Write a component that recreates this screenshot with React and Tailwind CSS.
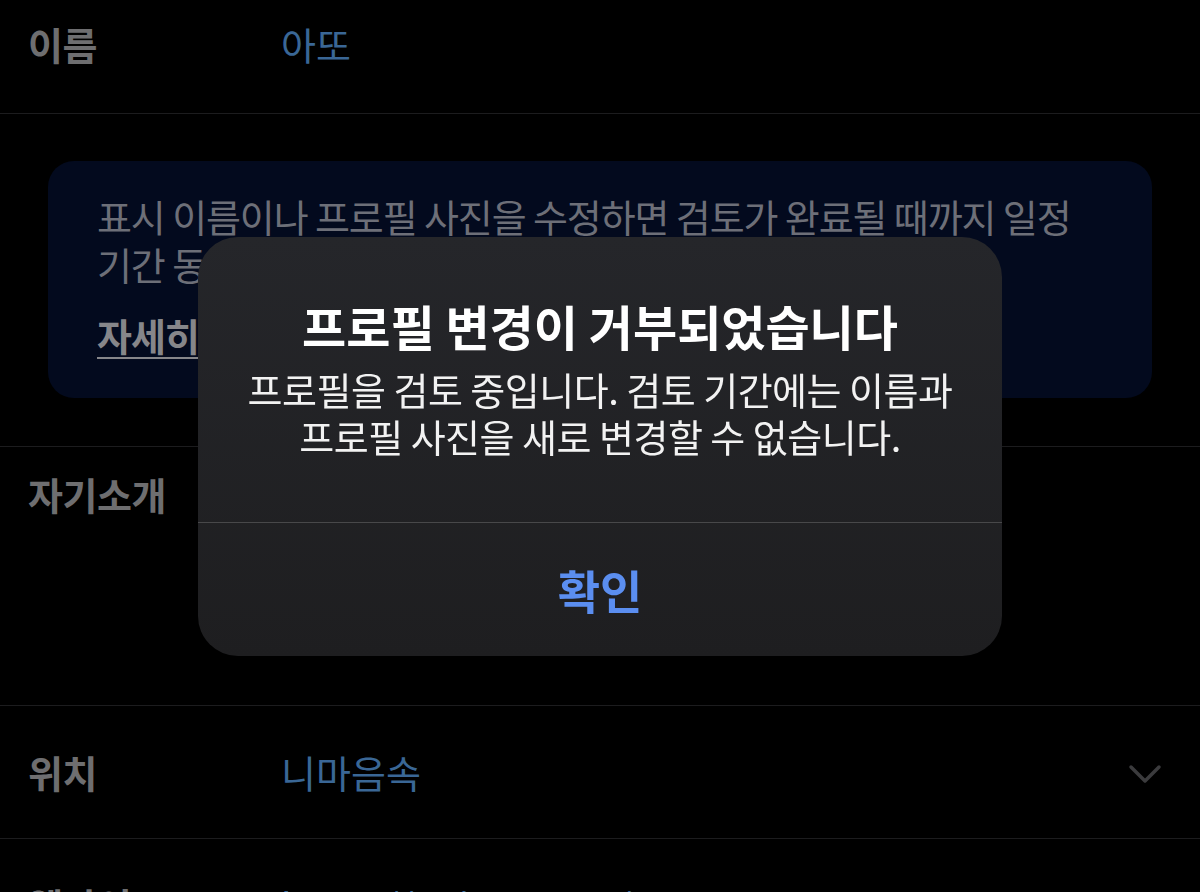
import React from "react";

const font = "font-['Noto_Sans_CJK_KR','Noto_Sans',sans-serif]";

function Row({ label, value, className, children }) {
  return (
    <div className={`flex px-[28px] border-b border-[#1c1c1e] ${className}`}>
      <div className="w-[253px] shrink-0 text-[38px] leading-[48px] font-semibold tracking-[-0.5px] text-[#6e6e70]">
        {label}
      </div>
      <div className="flex-1 text-[38px] leading-[48px] text-[#3a6796] whitespace-nowrap">
        {value}
      </div>
      {children}
    </div>
  );
}

function ChevronDown() {
  return (
    <svg width="34" height="22" viewBox="0 0 34 22" fill="none" className="mt-[5px] mr-[10px]">
      <polyline
        points="3,3 17,17 31,3"
        stroke="#3b3b3d"
        strokeWidth="3.5"
        strokeLinecap="round"
        strokeLinejoin="round"
      />
    </svg>
  );
}

function ReviewAlert() {
  return (
    <div className="fixed inset-0 flex items-center justify-center">
      <div className="w-[804px] h-[419px] rounded-[40px] bg-linear-to-b from-[#25262a] to-[#1e1e20] flex flex-col overflow-hidden">
        <div className="flex flex-col items-center pt-[60px] h-[286px] border-b border-[#48484a]">
          <h2 className="text-[48px] leading-[56px] font-bold text-white">
            프로필 변경이 거부되었습니다
          </h2>
          <p className="mt-[12px] text-center text-[38px] leading-[47px] tracking-[-0.5px] text-[#f2f2f2]">
            프로필을 검토 중입니다. 검토 기간에는 이름과
            <br />
            프로필 사진을 새로 변경할 수 없습니다.
          </p>
        </div>
        <button className="flex-1 flex items-center justify-center text-[46px] font-semibold text-[#5b8ef0]">
          확인
        </button>
      </div>
    </div>
  );
}

export default function App() {
  return (
    <div className={`${font} h-screen overflow-hidden bg-black`}>
      {/* 이름 */}
      <Row label="이름" value="아또" className="h-[114px] pt-[20px]" />

      {/* 안내 박스 */}
      <div className="px-[48px] pt-[47px] pb-[48px] border-b border-[#1c1c1e]">
        <div className="h-[237px] rounded-[26px] bg-[#030a1e] pl-[49px] pr-[40px] pt-[31px]">
          <p className="text-[38px] leading-[48px] tracking-[-1.1px] text-[#6d6f78] whitespace-nowrap">
            표시 이름이나 프로필 사진을 수정하면 검토가 완료될 때까지 일정
            <br />
            기간 동안 변경 사항이 반영되지 않을 수 있습니다.
          </p>
          <a className="mt-[23px] inline-block text-[38px] leading-[48px] font-semibold tracking-[-1px] text-[#86868a] underline underline-offset-[6px] decoration-[2px]">
            자세히 알아보기
          </a>
        </div>
      </div>

      {/* 자기소개 */}
      <Row label="자기소개" value="" className="h-[259px] pt-[23px]" />

      {/* 위치 */}
      <Row label="위치" value="니마음속" className="h-[133px] items-center">
        <ChevronDown />
      </Row>

      {/* 웹사이트 */}
      <Row label="웹사이트" value="https://twitter.com/atto_tt" className="h-[133px] items-center" />

      <ReviewAlert />
    </div>
  );
}
